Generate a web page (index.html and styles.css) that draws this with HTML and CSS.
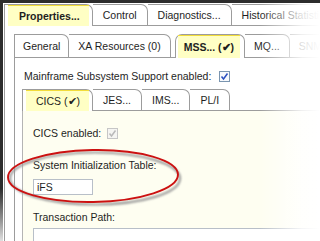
FILE: index.html
```html
<!DOCTYPE html>
<html lang="en">
<head>
    <meta charset="UTF-8" />
    <title>MSS Properties</title>
    <link rel="stylesheet" href="styles.css">
</head>
<body>
    <div id="shot">
        <div class="edge"></div>
        <div class="window">
            <div class="tabs tabs-top">
                <div class="tab first on on-props"><span class="hl bold">Properties...</span></div>
                <div class="tab">Control</div>
                <div class="tab">Diagnostics...</div>
                <div class="tab">Historical Statistics...</div>
            </div>
            <div class="panel panel-outer">
                <div class="tabs tabs-mid">
                    <div class="tab first">General</div>
                    <div class="tab">XA Resources (0)</div>
                    <div class="tab on round"><span class="hl bold">MSS... (✔)</span></div>
                    <div class="tab">MQ...</div>
                    <div class="tab">SNMP...</div>
                </div>
                <div class="panel panel-mid">
                    <div class="row">
                        <span>Mainframe Subsystem Support enabled:</span>
                        <span class="check"><svg viewBox="0 0 9 9"><polyline points="1.5,4.5 3.5,7 7.5,1.5" /></svg></span>
                    </div>
                    <div class="tabs tabs-low">
                        <div class="tab first on on-cics"><span class="hl">CICS (✔)</span></div>
                        <div class="tab">JES...</div>
                        <div class="tab">IMS...</div>
                        <div class="tab">PL/I</div>
                    </div>
                    <div class="panel panel-low">
                        <div class="row row-cics">
                            <span>CICS enabled:</span>
                            <span class="check off"><svg viewBox="0 0 9 9"><polyline points="1.5,4.5 3.5,7 7.5,1.5" /></svg></span>
                        </div>
                        <div class="row row-sit">System Initialization Table:</div>
                        <div class="field field-sit">iFS</div>
                        <div class="row row-path">Transaction Path:</div>
                        <div class="field field-path"></div>
                    </div>
                </div>
            </div>
        </div>

        <!-- callout ring over the SIT field -->
        <svg class="ring" width="200" height="80" viewBox="0 0 200 80">
            <defs>
                <filter id="soft" x="-10%" y="-20%" width="120%" height="140%">
                    <feGaussianBlur stdDeviation="1.2" />
                </filter>
            </defs>
            <ellipse cx="95" cy="38.5" rx="85" ry="26" fill="none" stroke="#9a9a9a" stroke-width="2.2" filter="url(#soft)" />
            <ellipse cx="93" cy="36" rx="85" ry="26" fill="none" stroke="#cc1111" stroke-width="1.9" transform="rotate(-1 93 36)" />
        </svg>
        <div class="fade"></div>
    </div>
</body>
</html>
```

FILE: styles.css
```css
* { box-sizing: border-box; }
html, body {
    margin: 0;
    background: #fff;
}
body {
    font-family: "Liberation Sans", Arial, sans-serif;
    font-size: 10.5px;
    color: #1e1e1e;
    overflow: hidden;
}
#shot {
    position: relative;
    width: 320px;
    height: 241px;
    display: flex;
    border-top: 3px solid #2c2c2c;
    overflow: hidden;
}
.edge {
    flex: none;
    width: 3px;
    background: linear-gradient(#2c2c2c 78%, #9a9a9a 92%, #e0e0e0);
}
.window {
    flex: 1;
    display: flex;
    flex-direction: column;
    padding: 1px 0 0 1px;
}

/* ───────── tab strips ───────── */
.tabs {
    display: flex;
    align-items: flex-end;
    border-bottom: 1px solid #9c9c9c;
    white-space: nowrap;
}
.tab {
    height: 21px;
    padding: 0 10px;
    display: flex;
    align-items: center;
    background: #fff;
    border-top: 1px solid #9c9c9c;
    border-right: 1px solid #9c9c9c;
    border-top-right-radius: 7px;
}
.tab.first { border-left: 1px solid #9c9c9c; }
.tabs-mid .tab {
    height: 23px;
    padding: 0 9px;
}
.tabs-mid .tab.first { padding: 0 8px; }

.tab.on {
    padding: 0 3px;
    margin-bottom: -1px;
    height: 22px;
    align-items: stretch;
}
.tabs-mid .tab.on { height: 24px; }
.tab.round {
    border-left: 1px solid #9c9c9c;
    border-top-left-radius: 7px;
    margin-left: 4px;
    padding: 0 4px 0 2px;
}
.on-props { padding: 0 3px 0 8px; }
.on-cics { padding: 0 1px 0 4px; }

.hl {
    display: flex;
    align-items: center;
    padding: 0 8px;
    background: #ffffc4;
    border-top: 1px solid #f2dc3a;
}
.on-props .hl { padding: 0 9px 0 11px; }
.on-cics .hl { padding: 0 9px 0 10px; }
.round .hl { padding: 0 6px; }
.bold { font-weight: bold; }

/* ───────── panels ───────── */
.panel-outer {
    flex: 1;
    border-left: 1px solid #9c9c9c;
    padding: 8px 0 0 9px;
    display: flex;
    flex-direction: column;
}
.panel-mid {
    flex: 1;
    border-left: 1px solid #9c9c9c;
    padding: 0 0 0 7px;
    display: flex;
    flex-direction: column;
}
.panel-low {
    flex: 1;
    background: #fefef1;
    border-left: 1px solid #b4b4b4;
    padding: 0 0 0 10px;
    display: flex;
    flex-direction: column;
}

.row {
    height: 14px;
    display: flex;
    align-items: center;
    gap: 8px;
}
.panel-mid > .row { margin: 11px 0 6px 2px; }
.row-cics {
    margin-top: 15px;
    gap: 6px;
}
.row-sit { margin-top: 18px; }
.row-path { margin-top: 15px; }

.check {
    width: 11px;
    height: 11px;
    border: 1px solid #7a95b0;
    background: #f7f9fc;
    display: flex;
}
.check svg {
    width: 9px;
    height: 9px;
    fill: none;
    stroke: #2a4fbf;
    stroke-width: 1.5;
}
.check.off {
    border-color: #c6c6c6;
    background: #f5f5f2;
}
.check.off svg { stroke: #b9b9b9; }

.field {
    background: #fff;
    border: 1px solid #b8bfc8;
    height: 16px;
    padding: 0 3px;
    display: flex;
    align-items: center;
}
.field-sit {
    width: 60px;
    margin-top: 7px;
}
.field-path {
    margin-top: 4px;
    height: 30px;
}

/* ───────── overlays ───────── */
.ring {
    position: absolute;
    left: 0;
    top: 137px;
}
.fade {
    position: absolute;
    top: 0;
    right: 0;
    bottom: 0;
    width: 60px;
    background: linear-gradient(to right, rgba(255,255,255,0), rgba(255,255,255,0.85) 70%, #fff);
}
```
